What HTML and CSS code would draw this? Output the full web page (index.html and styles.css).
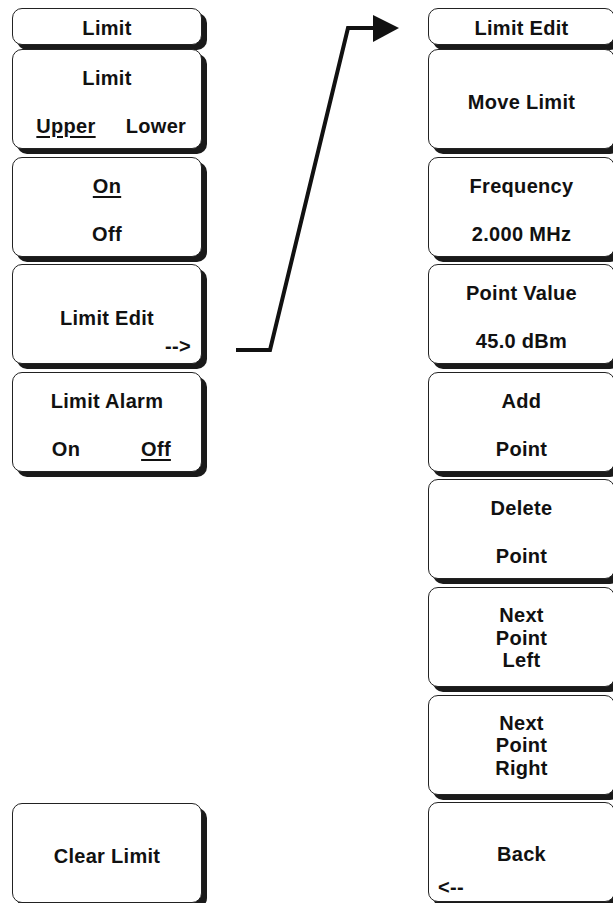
FILE: index.html
```html
<!DOCTYPE html>
<html lang="en">
<head>
    <meta charset="UTF-8">
    <title>Limit Menu</title>
    <link rel="stylesheet" href="styles.css">
</head>
<body>
    <div class="page">
        <!-- Limit menu -->
        <div class="menu">
            <div class="key key-title">Limit</div>
            <div class="key key-two">
                <div>Limit</div>
                <div class="choices"><span class="sel">Upper</span><span>Lower</span></div>
            </div>
            <div class="key key-two">
                <div><span class="sel">On</span></div>
                <div>Off</div>
            </div>
            <div class="key key-sub">
                <div class="label">Limit Edit</div>
                <div class="more more-right">--&gt;</div>
            </div>
            <div class="key key-two">
                <div>Limit Alarm</div>
                <div class="choices"><span>On</span><span class="sel">Off</span></div>
            </div>
            <div class="key key-one key-bottom">Clear Limit</div>
        </div>

        <!-- connector arrow -->
        <div class="link">
            <svg width="226" height="380" viewBox="0 0 226 380">
                <polyline points="34,350 68,350 146,28 174,28" fill="none" stroke="#111" stroke-width="4" stroke-linejoin="miter"/>
                <polygon points="171,15 197,28 171,42" fill="#111"/>
            </svg>
        </div>

        <!-- Limit Edit menu -->
        <div class="menu menu-edit">
            <div class="key key-title">Limit Edit</div>
            <div class="key key-one">Move Limit</div>
            <div class="key key-two">
                <div>Frequency</div>
                <div>2.000 MHz</div>
            </div>
            <div class="key key-two">
                <div>Point Value</div>
                <div>45.0 dBm</div>
            </div>
            <div class="key key-two">
                <div>Add</div>
                <div>Point</div>
            </div>
            <div class="key key-two">
                <div>Delete</div>
                <div>Point</div>
            </div>
            <div class="key key-one key-lines">Next<br>Point<br>Left</div>
            <div class="key key-one key-lines">Next<br>Point<br>Right</div>
            <div class="key key-sub key-back">
                <div class="label">Back</div>
                <div class="more more-left">&lt;--</div>
            </div>
        </div>
    </div>
</body>
</html>
```

FILE: styles.css
```css
html, body {
    margin: 0;
    padding: 0;
    background-color: white;
    overflow: hidden;
}

body {
    font-family: "Liberation Sans", Arial, sans-serif;
    font-weight: bold;
    font-size: 20px;
    letter-spacing: 0.3px;
    color: #111;
}

.page {
    display: flex;
    padding: 8px 0 0 12px;
}

.menu {
    display: flex;
    flex-direction: column;
    flex-shrink: 0;
    width: 190px;
    height: 895px;
}

.menu-edit {
    width: 187px;
}

.link {
    flex-shrink: 0;
    width: 226px;
}

.link svg {
    display: block;
    margin-top: -8px;
}

.key {
    box-sizing: border-box;
    height: 100px;
    margin-bottom: 7.6px;
    border: 1px solid #222;
    border-radius: 10px;
    background-color: white;
    box-shadow: 5px 5px 0 #1a1a1a;
    text-align: center;
    line-height: 22px;
}

.key-title {
    height: 37px;
    margin-bottom: 4px;
    padding-top: 8px;
}

.key-two {
    display: flex;
    flex-direction: column;
    justify-content: space-between;
    padding: 17px 0 11px;
}

.key-one {
    display: flex;
    align-items: center;
    justify-content: center;
    padding-top: 6px;
}

.key-lines {
    line-height: 22.5px;
    padding-top: 2px;
}

.key-bottom {
    margin-top: auto;
    margin-bottom: 0;
}

.key-sub {
    display: flex;
    flex-direction: column;
    padding: 32px 10px 9px;
}

.key-back {
    padding: 25px 9px 6px;
    margin-bottom: 0;
}

.key-sub .label {
    flex: 1;
    display: flex;
    align-items: center;
    justify-content: center;
}

.more {
    line-height: 16px;
}

.more-right {
    text-align: right;
}

.more-left {
    text-align: left;
}

.choices {
    display: grid;
    grid-template-columns: 1fr 1fr;
    padding-left: 8px;
}

.sel {
    text-decoration: underline;
    text-decoration-thickness: 2px;
    text-underline-offset: 3px;
}
```
